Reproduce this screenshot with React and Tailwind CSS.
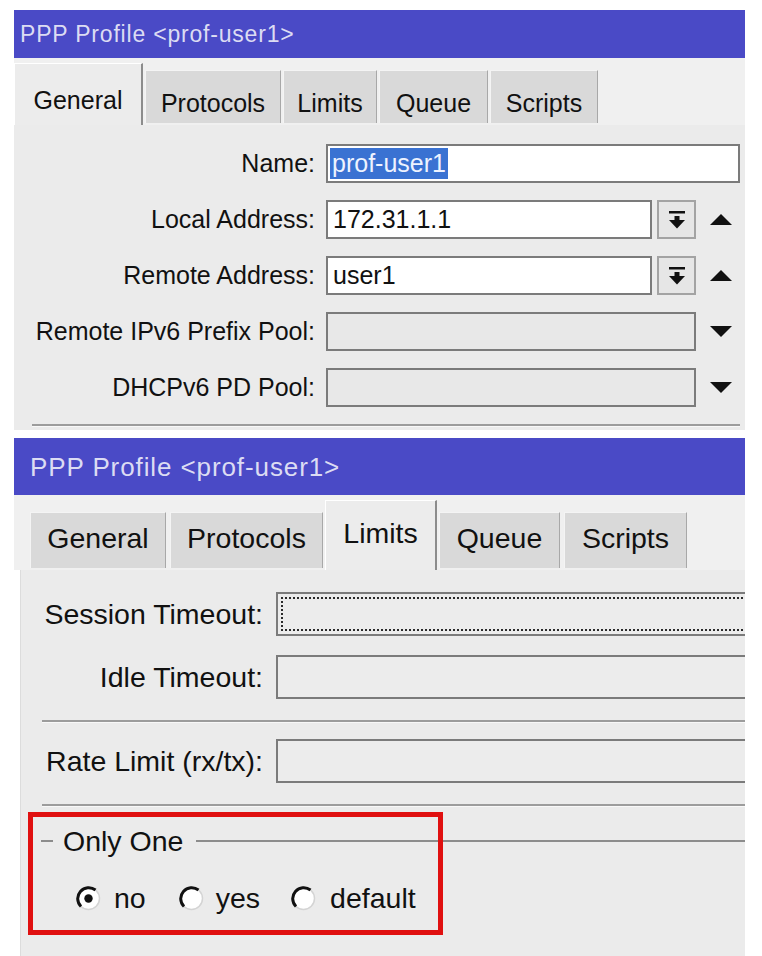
import React from 'react';

function Tab({ label, active, w }) {
  const base = 'flex justify-center shrink-0';
  if (active) {
    return (
      <div className={`${base} ${w} bg-[#ececec] border-l border-t border-white border-r-2 border-r-[#8c8c8c]`}>
        {label}
      </div>
    );
  }
  return (
    <div className={`${base} ${w} bg-[#d9d9d9] border-l border-t border-[#f4f4f4] border-r border-r-[#a8a8a8]`}>
      {label}
    </div>
  );
}

function TriUp() {
  return (
    <svg width="24" height="13" viewBox="0 0 24 13">
      <path d="M1 12 L12 1 L23 12 Z" fill="#111" />
    </svg>
  );
}

function TriDown() {
  return (
    <svg width="24" height="13" viewBox="0 0 24 13">
      <path d="M1 1 L23 1 L12 12 Z" fill="#111" />
    </svg>
  );
}

function DropButton() {
  return (
    <div className="ml-[5px] w-[39px] h-full flex items-center justify-center bg-[#e6e6e6] border-2 border-[#a3a3a3]">
      <svg width="18" height="20" viewBox="0 0 18 20">
        <rect x="1" y="1" width="16" height="2.5" fill="#111" />
        <rect x="6.5" y="6" width="5" height="5" fill="#111" />
        <path d="M1 10 L17 10 L9 18.5 Z" fill="#111" />
      </svg>
    </div>
  );
}

function Radio({ checked }) {
  return (
    <svg width="25" height="25" viewBox="0 0 25 25">
      <circle cx="12.5" cy="12.5" r="11" fill="#fff" stroke="#d4d4d4" strokeWidth="1.5" />
      <path d="M5 20.5 A11 11 0 0 1 19.5 4" fill="none" stroke="#111" strokeWidth="3" />
      {checked && <circle cx="12.5" cy="12.5" r="4.2" fill="#111" />}
    </svg>
  );
}

function Row1({ label, children }) {
  return (
    <div className="flex items-center h-[39px]">
      <div className="w-[301px] text-right">{label}</div>
      <div className="ml-[11px] flex items-center h-full">{children}</div>
    </div>
  );
}

function Row2({ label, children, mt }) {
  return (
    <div className={`flex items-center h-[44px] ${mt}`}>
      <div className="w-[242px] text-right shrink-0">{label}</div>
      <div className="ml-[13px] flex items-center h-full shrink-0">{children}</div>
    </div>
  );
}

const inputBox = 'h-full border-2 border-[#7b7b7b]';

export default function App() {
  return (
    <div className="relative w-[762px] h-[956px] bg-white overflow-hidden text-[#111] font-['Liberation_Sans',Arial,sans-serif] leading-none">
      <div className="pl-[14px] pt-[10px]">
        {/* first window: General tab */}
        <div className="w-[731px] bg-[#ebebeb] text-[25px]">
          <div className="h-[48px] bg-[#4a4ac6] text-[#dcdcf3] text-[23px] tracking-[0.8px] pl-[6px] flex items-center">
            PPP Profile &lt;prof-user1&gt;
          </div>
          <div className="h-[67px] bg-[#f0f0f0] flex items-end gap-[2px]">
            <Tab label="General" active w="w-[129px] h-[62px] pt-[24px]" />
            <Tab label="Protocols" w="w-[136px] h-[53px] mb-[2px] pt-[20px]" />
            <Tab label="Limits" w="w-[94px] h-[53px] mb-[2px] pt-[20px]" />
            <Tab label="Queue" w="w-[109px] h-[53px] mb-[2px] pt-[20px]" />
            <Tab label="Scripts" w="w-[108px] h-[53px] mb-[2px] pt-[20px]" />
          </div>
          <div className="pt-[19px] pb-[3px] flex flex-col">
            <div className="flex flex-col gap-[17px]">
              <Row1 label="Name:">
                <div className={`${inputBox} w-[414px] bg-white flex items-center pl-[2px]`}>
                  <span className="bg-[#3a72d2] text-[#eef3ff] px-[2px] py-[3px]">prof-user1</span>
                </div>
              </Row1>
              <Row1 label="Local Address:">
                <div className={`${inputBox} w-[326px] bg-white flex items-center pl-[5px]`}>172.31.1.1</div>
                <DropButton />
                <div className="w-[49px] flex justify-center">
                  <TriUp />
                </div>
              </Row1>
              <Row1 label="Remote Address:">
                <div className={`${inputBox} w-[326px] bg-white flex items-center pl-[5px]`}>user1</div>
                <DropButton />
                <div className="w-[49px] flex justify-center">
                  <TriUp />
                </div>
              </Row1>
              <Row1 label="Remote IPv6 Prefix Pool:">
                <div className={`${inputBox} w-[370px] bg-[#e8e8e8]`} />
                <div className="w-[49px] flex justify-center">
                  <TriDown />
                </div>
              </Row1>
              <Row1 label="DHCPv6 PD Pool:">
                <div className={`${inputBox} w-[370px] bg-[#e8e8e8]`} />
                <div className="w-[49px] flex justify-center">
                  <TriDown />
                </div>
              </Row1>
            </div>
            <div className="mt-[17px] ml-[18px] w-[708px] border-t-2 border-[#9c9c9c] border-b border-b-[#f8f8f8]" />
          </div>
        </div>

        {/* second window: Limits tab */}
        <div className="mt-[8px] w-[731px]">
          <div className="h-[57px] bg-[#4a4ac6] text-[#dcdcf3] text-[26px] tracking-[0.9px] pl-[16px] flex items-center">
            PPP Profile &lt;prof-user1&gt;
          </div>
          <div className="h-[75px] bg-[#f0f0f0] flex items-end gap-[4px] pl-[16px] text-[28.5px]">
            <Tab label="General" w="w-[136px] h-[56px] mb-[2px] pt-[11px]" />
            <Tab label="Protocols" w="w-[153px] h-[56px] mb-[2px] pt-[11px]" />
            <Tab label="Limits" active w="w-[112px] h-[70px] pt-[18px] -mx-[2px]" />
            <Tab label="Queue" w="w-[121px] h-[56px] mb-[2px] pt-[11px]" />
            <Tab label="Scripts" w="w-[123px] h-[56px] mb-[2px] pt-[11px]" />
          </div>
          <div className="ml-[6px] w-[725px] h-[400px] bg-[#ebebeb] overflow-hidden text-[28.5px] pt-[22px] border-l border-[#dcdcdc]">
            <Row2 label="Session Timeout:">
              <div className={`${inputBox} w-[520px] bg-[#ececec] p-[3px]`}>
                <div className="h-full border-2 border-dotted border-[#2a2a2a]" />
              </div>
            </Row2>
            <Row2 label="Idle Timeout:" mt="mt-[19px]">
              <div className={`${inputBox} w-[520px] bg-[#ececec]`} />
            </Row2>
            <div className="mt-[21px] ml-[21px] w-[720px] border-t-2 border-[#9c9c9c] border-b border-b-[#f8f8f8]" />
            <Row2 label="Rate Limit (rx/tx):" mt="mt-[16px]">
              <div className={`${inputBox} w-[520px] bg-[#ececec]`} />
            </Row2>
            <div className="mt-[21px] ml-[21px] w-[720px] border-t-2 border-[#9c9c9c] border-b border-b-[#f8f8f8]" />

            <div className="mt-[18px] h-[32px] flex items-center">
              <div className="ml-[20px] w-[12px] border-t-2 border-[#8c8c8c]" />
              <span className="ml-[10px]">Only One</span>
              <div className="ml-[13px] flex-1 border-t-2 border-[#8c8c8c]" />
            </div>
            <div className="mt-[26px] ml-[55px] h-[30px] flex items-center">
              <Radio checked />
              <span className="ml-[13px]">no</span>
              <span className="ml-[33px] flex items-center">
                <Radio />
              </span>
              <span className="ml-[12px]">yes</span>
              <span className="ml-[31px] flex items-center">
                <Radio />
              </span>
              <span className="ml-[14px]">default</span>
            </div>
          </div>
        </div>
      </div>

      {/* red annotation frame */}
      <div className="absolute left-[28px] top-[812px] w-[415px] h-[123px] border-[5px] border-[#e01010]" />
    </div>
  );
}
